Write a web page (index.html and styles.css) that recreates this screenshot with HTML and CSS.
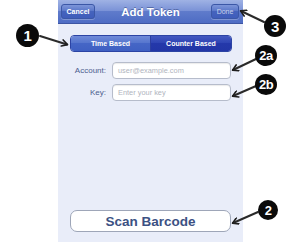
FILE: index.html
```html
<!DOCTYPE html>
<html>
<head>
<meta charset="utf-8">
<link rel="stylesheet" href="styles.css">
</head>
<body>
<div class="stage">
  <div class="phone">
    <div class="navbar">
      <div class="nav-left"><span class="nav-btn cancel">Cancel</span></div>
      <div class="nav-title">Add Token</div>
      <div class="nav-right"><span class="nav-btn done">Done</span></div>
    </div>
    <div class="segmented">
      <div class="seg seg-left">Time Based</div>
      <div class="seg seg-right">Counter Based</div>
    </div>
    <div class="form">
      <div class="row">
        <label class="label">Account:</label>
        <div class="field">user@example.com</div>
      </div>
      <div class="row">
        <label class="label">Key:</label>
        <div class="field">Enter your key</div>
      </div>
    </div>
    <div class="scan">Scan Barcode</div>
  </div>

  <svg class="arrows" width="300" height="242" viewBox="0 0 300 242">
    <defs>
      <marker id="head" markerWidth="8" markerHeight="8" refX="6" refY="4" orient="auto" markerUnits="userSpaceOnUse">
        <path d="M1,0.8 L6.5,4 L1,7.2" fill="none" stroke="#1e1e1e" stroke-width="1.6" stroke-linecap="round" stroke-linejoin="round"/>
      </marker>
    </defs>
    <g stroke="#2a2a2a" stroke-width="2" stroke-linecap="round" fill="none" marker-end="url(#head)">
      <line x1="40" y1="36" x2="67" y2="44.5"/>
      <line x1="264" y1="22" x2="241" y2="11"/>
      <line x1="256" y1="59" x2="233" y2="70"/>
      <line x1="256" y1="86" x2="233" y2="96"/>
      <line x1="258" y1="212" x2="233" y2="223"/>
    </g>
  </svg>

  <span class="callout c1">1</span>
  <span class="callout c3">3</span>
  <span class="callout c2a">2a</span>
  <span class="callout c2b">2b</span>
  <span class="callout c2">2</span>
</div>
</body>
</html>
```
FILE: styles.css
```css
* { box-sizing: border-box; }
html, body {
  margin: 0;
  padding: 0;
  background: #ffffff;
}
body {
  font-family: "Liberation Sans", Arial, sans-serif;
}
.stage {
  position: relative;
  width: 300px;
  height: 242px;
  overflow: hidden;
}
.phone {
  margin-left: 58px;
  width: 185px;
  height: 242px;
  background: #e9edf9;
  display: flex;
  flex-direction: column;
}
.navbar {
  height: 24px;
  display: grid;
  grid-template-columns: 1fr auto 1fr;
  align-items: center;
  padding: 0 3px;
  background: linear-gradient(#9fb2e4 0%, #7890d6 50%, #5f7bcb 50%, #4e6cc4 100%);
  border-bottom: 1px solid #3d55a3;
}
.nav-left { display: flex; justify-content: flex-start; }
.nav-right { display: flex; justify-content: flex-end; padding-right: 1px; }
.nav-title {
  color: #ffffff;
  font-weight: bold;
  font-size: 11.5px;
  text-shadow: 0 -1px 0 rgba(40, 60, 120, 0.5);
}
.nav-btn {
  display: flex;
  align-items: center;
  justify-content: center;
  height: 15px;
  border: 1px solid #3b57a6;
  border-radius: 3px;
  background: linear-gradient(#7d95d9 0%, #5875c8 50%, #4563bd 50%, #3f5dbb 100%);
  color: #ffffff;
  font-size: 7px;
  font-weight: bold;
  box-shadow: 0 1px 0 rgba(255,255,255,0.25);
}
.cancel { width: 34px; }
.done { width: 28px; color: rgba(255,255,255,0.7); font-weight: normal; }
.segmented {
  margin: 11px 11px 0 12px;
  height: 17px;
  display: flex;
  border-radius: 4px;
  overflow: hidden;
  border: 1px solid #2c44a4;
}
.seg {
  flex: 1;
  display: flex;
  align-items: center;
  justify-content: center;
  color: #ffffff;
  font-size: 7px;
  font-weight: bold;
}
.seg-left {
  background: linear-gradient(#6f8ad8 0%, #5474cd 50%, #4566c6 50%, #3f60c2 100%);
  border-right: 1px solid #2c3fa0;
}
.seg-right {
  flex: 0 0 80px;
  background: linear-gradient(#4258c0 0%, #2d43b3 50%, #2438aa 50%, #2236a6 100%);
}
.form {
  margin-top: 10px;
  display: flex;
  flex-direction: column;
  gap: 5px;
}
.row {
  display: flex;
  align-items: center;
  height: 17px;
}
.label {
  width: 48px;
  padding-right: 0;
  text-align: right;
  color: #4b5d8e;
  font-size: 8px;
}
.field {
  margin-left: 6px;
  width: 119px;
  height: 17px;
  background: #ffffff;
  border: 1px solid #b6bccb;
  border-radius: 4px;
  display: flex;
  align-items: center;
  padding-left: 5px;
  color: #b0b4be;
  font-size: 7.4px;
  box-shadow: inset 0 1px 1px rgba(0,0,0,0.08);
}
.scan {
  margin: auto 12px 10px 12px;
  height: 22px;
  background: #ffffff;
  border: 1px solid #9ea6b8;
  border-radius: 7px;
  display: flex;
  align-items: center;
  justify-content: center;
  color: #3c5183;
  font-size: 13.5px;
  font-weight: bold;
}
.arrows {
  position: absolute;
  left: 0;
  top: 0;
}
.callout {
  position: absolute;
  width: 22px;
  height: 22px;
  border-radius: 50%;
  background: #0a0a0a;
  color: #ffffff;
  font-weight: bold;
  font-size: 14px;
  display: flex;
  align-items: center;
  justify-content: center;
  letter-spacing: -0.5px;
}
.c1 { left: 16px; top: 24px; width: 23px; height: 23px; font-size: 15px; }
.c3 { left: 264px; top: 15px; width: 22px; height: 22px; font-size: 15px; }
.c2a { left: 255px; top: 45px; width: 22px; height: 21px; font-size: 13px; }
.c2b { left: 255px; top: 74px; width: 22px; height: 21px; font-size: 13px; }
.c2 { left: 258px; top: 200px; width: 20px; height: 20px; font-size: 13px; }
```
